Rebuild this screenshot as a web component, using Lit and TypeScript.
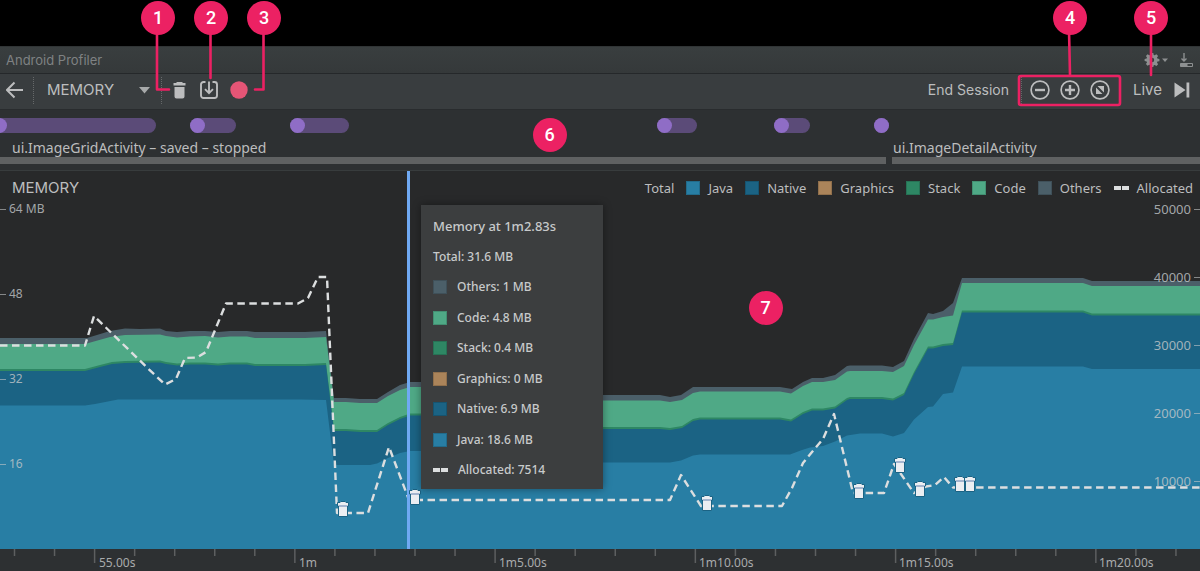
import { LitElement, html, svg, css } from "lit";
import { customElement, state } from "lit/decorators.js";

type Point = [number, number];

/* Plot space is 1200 wide by 378 high, the origin at the top left. */
const PLOT_W = 1200;
const PLOT_H = 378;

const OTHERS: Point[] = [
  [0, 167], [87, 167], [110, 160], [125, 157.5], [140, 158], [160, 157.5], [166, 160], [177, 161], [190, 160],
  [205, 160], [218, 161], [230, 160], [247, 160], [255, 161], [305, 161], [326, 160], [334, 227], [346, 227],
  [360, 228], [377, 228], [388, 221], [400, 214], [410, 211], [425, 211], [450, 224], [660, 224], [670, 226],
  [681, 224], [693, 216], [780, 216], [792, 218], [803, 211], [812, 207], [823, 207], [835, 204], [847, 195],
  [850, 194.5], [882, 194.5], [893, 196], [904, 190], [914, 168], [928, 142], [933, 143], [943, 140], [953, 132],
  [962, 107], [1083, 107], [1092, 110], [1200, 110],
];
const CODE: Point[] = [
  [0, 173], [85, 173], [110, 166], [125, 164], [160, 163.5], [166, 165], [177, 166.5], [190, 165.5], [205, 165],
  [218, 166.5], [230, 165.5], [247, 165.5], [255, 167], [305, 167], [326, 166], [334, 231], [346, 231], [360, 232],
  [377, 232], [388, 225], [400, 219], [410, 216], [425, 216], [450, 229.5], [660, 229.5], [670, 231], [682, 229],
  [693, 222], [700, 220.5], [780, 220.5], [791, 222.5], [803, 215], [812, 211], [823, 211], [835, 209], [847, 200.5],
  [850, 200], [882, 200], [893, 201], [904, 195], [914, 174], [928, 148.5], [933, 148.5], [943, 146], [953, 144.5],
  [962, 112], [1083, 112], [1092, 115], [1200, 115],
];
const NATIVE: Point[] = [
  [0, 199], [85, 199], [100, 195], [112, 192], [125, 191], [160, 190.5], [166, 192], [177, 193.5], [190, 192.5],
  [205, 192.5], [218, 193.5], [230, 192.5], [247, 192.5], [255, 194], [305, 194], [326, 193], [334, 259], [346, 259],
  [360, 260], [377, 260], [388, 253], [400, 247], [410, 243.5], [425, 243.5], [450, 257], [660, 257], [670, 258],
  [682, 256], [693, 249], [700, 247.5], [780, 247.5], [791, 249.5], [803, 242], [812, 238.5], [823, 238.5],
  [835, 236.5], [847, 228], [850, 227], [882, 227], [893, 228.5], [904, 223], [914, 202], [928, 176.5], [933, 176.5],
  [943, 174], [953, 173], [962, 140.5], [1083, 140.5], [1092, 143.5], [1200, 143.5],
];
const JAVA: Point[] = [
  [0, 234.5], [85, 234.5], [95, 233], [118, 228.5], [300, 228.5], [326, 229], [334, 294], [370, 294], [377, 292.5],
  [388, 287], [400, 282], [410, 280], [425, 280], [450, 291.5], [670, 291.5], [681, 289.5], [693, 284.5],
  [700, 283.5], [790, 283.5], [802, 279], [810, 276.5], [823, 275], [835, 270.5], [847, 264.5], [860, 262.5],
  [882, 262.5], [893, 265.5], [904, 262], [914, 248.5], [928, 236], [933, 235.5], [943, 223], [953, 221.5],
  [962, 195.5], [1083, 195.5], [1092, 198], [1200, 198],
];
const ALLOCATED: Point[] = [
  [0, 174.5], [85, 174.5], [94, 145], [148, 197.5], [165, 213.5], [176, 208], [185, 187], [197, 186.5], [206, 181],
  [226, 132.5], [298, 132.5], [308, 127], [318, 106], [327, 106], [337, 342], [368, 342], [389, 276], [409, 329],
  [670, 329], [681, 304], [701, 335], [782, 335], [792, 317], [803, 292], [812, 281], [823, 268], [834, 243],
  [853, 322], [884, 322], [894, 293], [914, 322], [926, 315.5], [935, 314], [944, 306], [953, 316.5], [1200, 316.5],
];
const COLLECTIONS: Point[] = [
  [342.5, 338], [414.5, 326], [706.5, 332], [858.5, 319.5], [899.5, 294], [919.5, 318], [959.5, 313], [970, 313],
];

const TOUCHES: Point[] = [[-8, 156], [190, 236], [290, 349], [657, 697], [774, 810], [874, 889]];

const LEGEND = [
  ["java", "Java"], ["native", "Native"], ["graphics", "Graphics"], ["stack", "Stack"],
  ["code", "Code"], ["others", "Others"], ["dashes", "Allocated"],
];
const READOUT = [
  ["others", "Others: 1 MB"], ["code", "Code: 4.8 MB"], ["stack", "Stack: 0.4 MB"], ["graphics", "Graphics: 0 MB"],
  ["native", "Native: 6.9 MB"], ["java", "Java: 18.6 MB"], ["dashes", "Allocated: 7514"],
];

const line = (points: Point[]) => "M" + points.map((p) => p.join(" ")).join("L");
const area = (points: Point[], lift = 0) =>
  line(points.map(([x, y]) => [x, y - lift] as Point)) + `L${PLOT_W} ${PLOT_H}L0 ${PLOT_H}Z`;
const pct = (value: number, whole: number) => `${(value / whole) * 100}%`;

@customElement("memory-chart")
class MemoryChart extends LitElement {
  static styles = css`
    :host { display: grid; color: #bcbdbe; background: #28292a; border-top: 1px solid #383c3d; box-sizing: border-box; }
    .layer { grid-area: 1 / 1; min-width: 0; min-height: 0; }
    .canvas { position: relative; overflow: hidden; }
    .plot { display: block; position: absolute; inset: 0; width: 100%; height: 100%; }
    .fill-others { fill: #4b5f69; }
    .fill-code { fill: #4fa986; }
    .fill-stack { fill: #2e8764; }
    .fill-native { fill: #1b6384; }
    .fill-java { fill: #287ea4; }
    .allocated { fill: none; stroke: #dcdedf; stroke-width: 2.4; stroke-dasharray: 7.5 4.5; stroke-linejoin: round; vector-effect: non-scaling-stroke; }
    .collection { position: absolute; width: 13px; height: 16px; margin: -8px 0 0 -6px; }
    .cursor { position: absolute; top: 0; bottom: 0; width: 3px; background: #70a9f3; margin-left: -1px; }
    .frame { display: flex; flex-direction: column; z-index: 1; padding-bottom: 8px; }
    .head { display: flex; justify-content: space-between; align-items: center; height: 30px; padding: 3px 7px 0 12px; box-sizing: border-box; }
    h2 { margin: 0; font: 400 15px/20px Inter, sans-serif; }
    .legend { display: flex; gap: 12px; margin: 0; padding: 0; list-style: none; font-size: 13px; line-height: 16px; }
    .entry { display: flex; align-items: center; gap: 8px; }
    .swatch { width: 14px; height: 14px; box-sizing: border-box; border: 1px solid rgba(0, 0, 0, 0.15); }
    .java { background: #287ea4; }
    .native { background: #1b6384; }
    .graphics { background: #ab845a; }
    .stack { background: #2e8764; }
    .code { background: #4fa986; }
    .others { background: #4b5f69; }
    .dashes { width: 15px; height: 4px; border: 0; background: linear-gradient(90deg, #dcdedf 7px, transparent 7px 8px, #dcdedf 8px); }
    .axes { flex: 1; display: flex; justify-content: space-between; font-size: 13px; line-height: 16px; color: rgba(196, 200, 202, 0.8); }
    .axis { display: grid; grid-auto-rows: 1fr; }
    .mark { display: flex; align-items: center; height: 16px; gap: 3px; font-size: 12px; }
    .right .mark { font-size: 13px; }
    .left .mark::before, .right .mark::after { content: ""; width: 6px; height: 1px; background: rgba(196, 200, 202, 0.6); }
    .tooltip { position: absolute; top: 34px; width: 182px; height: 284px; margin-left: 12px; padding: 11px 12px 9px; box-sizing: border-box; display: flex; flex-direction: column; justify-content: space-between; background: #3c3e3f; box-shadow: 0 0 8px rgba(0, 0, 0, 0.4); z-index: 2; font-size: 12px; line-height: 20px; font-weight: 500; color: #c8cacb; }
    .when { font-size: 13px; }
    .tooltip .entry { gap: 10px; }
  `;

  render() {
    return html`
      <div class="layer canvas">
        <svg class="plot" viewBox="0 0 ${PLOT_W} ${PLOT_H}" preserveAspectRatio="none" aria-hidden="true">
          <path class="fill-others" d=${area(OTHERS)} />
          <path class="fill-code" d=${area(CODE)} />
          <path class="fill-stack" d=${area(NATIVE, 1)} />
          <path class="fill-native" d=${area(NATIVE, -1)} />
          <path class="fill-java" d=${area(JAVA)} />
          <path class="allocated" d=${line(ALLOCATED)} />
        </svg>
        <div class="cursor" style="left:${pct(408, PLOT_W)}"></div>
        ${COLLECTIONS.map(
          ([x, y]) => html`<svg class="collection" style="left:${pct(x, PLOT_W)};top:${pct(y, PLOT_H)}" viewBox="0 0 13 16">
            <path d="M4 .5h4l1 1h2.500v3.500h-1v10.500h-9V5h-1V1.500H3z" fill="#ebeef2" stroke="#1b6384" stroke-width="1" />
            <path d="M2 5h8" stroke="#5f7fae" />
          </svg>`
        )}
        <div class="tooltip" role="tooltip" style="left:${pct(409, PLOT_W)}">
          <div class="when">Memory at 1m2.83s</div>
          <div>Total: 31.6 MB</div>
          ${READOUT.map(([kind, text]) => html`<div class="entry"><span class="swatch ${kind}"></span>${text}</div>`)}
        </div>
      </div>
      <div class="layer frame">
        <div class="head">
          <h2>MEMORY</h2>
          <ul class="legend">
            <li>Total</li>
            ${LEGEND.map(([kind, text]) => html`<li class="entry"><span class="swatch ${kind}"></span>${text}</li>`)}
          </ul>
        </div>
        <div class="axes">
          <div class="axis left">${["64 MB", "48", "32", "16"].map((t) => html`<div><div class="mark">${t}</div></div>`)}</div>
          <div class="axis right">
            ${["50000", "40000", "30000", "20000", "10000"].map((t) => html`<div><div class="mark">${t}</div></div>`)}
          </div>
        </div>
      </div>
    `;
  }
}

@customElement("time-axis")
class TimeAxis extends LitElement {
  static styles = css`
    :host { display: grid; height: 22px; background: #2d3032; color: #a9abac; overflow: hidden; }
    .ticks, .labels { grid-area: 1 / 1; width: 100%; height: 22px; box-sizing: border-box; }
    .tick { stroke: #5d5f60; stroke-width: 1.5; vector-effect: non-scaling-stroke; }
    .labels { display: grid; grid-auto-flow: column; grid-auto-columns: 16.6667%; width: 100%; margin-left: 8.25%; font-size: 12px; line-height: 16px; padding-top: 6px; }
  `;

  render() {
    const ticks = Array.from({ length: 30 }, (_, i) => i);
    return html`
      <svg class="ticks" viewBox="0 0 1200 22" preserveAspectRatio="none" aria-hidden="true">
        ${ticks.map((i) => {
          const x = 14.5 + i * 40.05;
          return svg`<path class="tick" d="M${x} 0v${i % 5 === 2 ? 14 : 7}" />`;
        })}
      </svg>
      <div class="labels">
        ${["55.00s", "1m", "1m5.00s", "1m10.00s", "1m15.00s", "1m20.00s"].map((t) => html`<span>${t}</span>`)}
      </div>
    `;
  }
}

@customElement("app-root")
class AppRoot extends LitElement {
  @state() private stage = "MEMORY";

  static styles = css`
    :host { display: flex; flex-direction: column; position: relative; min-height: 100vh; padding-top: 46px; box-sizing: border-box; background: #000; color: #bcbdbe; font-family: "Noto Sans", "Open Sans", sans-serif; overflow: hidden; }
    button, select { font: inherit; color: inherit; background: none; border: 0; padding: 0; margin: 0; }
    svg { display: block; }
    .titlebar { display: flex; align-items: center; height: 28px; box-sizing: border-box; padding: 0 6px; background: linear-gradient(#393e3f, #35393a); border-top: 1px solid #303435; border-bottom: 1px solid #25282a; font: 400 13px/16px Inter, sans-serif; color: #7f8283; }
    .title { flex: 1; font: inherit; margin: 0; }
    .gear { display: flex; align-items: center; margin-right: 11px; }
    .toolbar { display: flex; align-items: center; height: 36px; box-sizing: border-box; padding: 0 3px 3px 0; background: #393d3f; border-bottom: 1px solid #292c2e; font: 400 15px/20px Inter, sans-serif; }
    .tool { display: flex; justify-content: center; align-items: center; width: 30px; height: 30px; }
    .dots { width: 0; height: 27px; border-left: 1px dotted #66696a; }
    .stage { display: grid; align-items: center; width: 103px; margin: 0 11px 0 13px; }
    .stage select { grid-area: 1 / 1; width: 100%; appearance: none; }
    .caret { grid-area: 1 / 1; justify-self: end; pointer-events: none; }
    .back { margin-right: 3px; }
    .toolgroup { display: flex; margin-left: 2px; }
    .push { flex: 1; }
    .end { margin-right: 12px; font-size: 14px; }
    .zoomdots { margin-right: 3px; }
    .live { margin: 0 5px 0 18px; }
    .events { height: 60px; box-sizing: border-box; padding-top: 8px; background: #2d3032; font-size: 14px; line-height: 16px; }
    .track { position: relative; height: 15px; overflow: hidden; }
    .touch { position: absolute; height: 15px; border-radius: 8px; background: #5b4b78; }
    .touch::before { content: ""; display: block; width: 15px; height: 15px; border-radius: 8px; background: #8f6dc6; }
    .activities { display: grid; grid-template-columns: 886fr 308fr; gap: 6px; padding-top: 7px; }
    .activity { min-width: 0; white-space: nowrap; border-bottom: 7px solid #5f6162; padding: 0 0 1px 12px; }
    .activity + .activity { padding-left: 1px; }
    .chart { flex: 1; }
    .badge { position: absolute; display: grid; place-items: center; width: 34px; height: 34px; border-radius: 17px; background: #ec2163; color: #fff; font: 500 18px/34px Roboto, sans-serif; z-index: 5; }
    .leads { position: absolute; top: 0; z-index: 4; pointer-events: none; fill: none; stroke: #ec2163; stroke-width: 2.600; stroke-linejoin: round; stroke-linecap: round; }
    .leads-left { left: 0; }
    .leads-right { right: 0; }
    .b1 { left: 141px; top: 1px; }
    .b2 { left: 194px; top: 1px; }
    .b3 { left: 247px; top: 1px; }
    .b4 { right: 113px; top: 1px; }
    .b5 { right: 32px; top: 1px; }
    .b6 { left: calc(45.8% - 17px); top: 118px; }
    .b7 { left: calc(63.8% - 17px); top: 291px; }
  `;

  render() {
    return html`
      <header class="titlebar">
        <h1 class="title">Android Profiler</h1>
        <button class="gear" aria-label="Settings">
          <svg width="24" height="16" viewBox="0 0 24 16" fill="#8d9091">
            <path fill-rule="evenodd" d="M6.700 1h2.600l.4 1.900 1 .4 1.700-1.100 1.700 1.700L13 5.600l.4 1 2 .4v2.200l-2 .4-.4 1 1.100 1.700-1.700 1.700-1.700-1.100-1 .4L9.300 15H6.700l-.4-1.900-1-.4-1.700 1.100-1.700-1.700L3 10.400l-.4-1-2-.4V7l2-.4.4-1-1.100-1.700 1.700-1.700 1.700 1.100 1-.4zM8 5.800A2.200 2.200 0 1 0 8 10.200 2.200 2.200 0 1 0 8 5.800z" />
            <path d="M18 6.500h6l-3 3.500z" />
          </svg>
        </button>
        <button aria-label="Hide">
          <svg width="15" height="16" viewBox="0 0 15 16" fill="none" stroke="#8d9091">
            <path d="M5 1v8M2.500 6.500L5 9l2.500-2.500" stroke-width="1.400" />
            <path d="M1.500 11.500h12v3h-12z" />
            <path d="M1.500 13h7" stroke-width="3" />
          </svg>
        </button>
      </header>
      <nav class="toolbar" aria-label="Profiler">
        <button class="tool back" aria-label="Back">
          <svg width="18" height="18" viewBox="0 0 18 18" fill="none" stroke="#bcbdbe" stroke-width="2"><path d="M17 9H1.500M8.500 1.500L1 9l7.500 7.500" /></svg>
        </button>
        <span class="dots"></span>
        <label class="stage">
          <select aria-label="Profiler stage" .value=${this.stage} @change=${(e: Event) => (this.stage = (e.target as HTMLSelectElement).value)}>
            <option>MEMORY</option>
          </select>
          <svg class="caret" width="11" height="7" viewBox="0 0 11 7"><path d="M0 0h11L5.500 6.500z" fill="#a7a9aa" /></svg>
        </label>
        <span class="dots"></span>
        <div class="toolgroup">
          <button class="tool" aria-label="Force garbage collection">
            <svg width="13" height="17" viewBox="0 0 13 17" fill="#bcbdbe"><path d="M4 0h5l1 1h2.500v2.500H.5V1H3zM1.500 5h10v9.500a2 2 0 0 1-2 2h-6a2 2 0 0 1-2-2z" /></svg>
          </button>
          <button class="tool" aria-label="Dump Java heap">
            <svg width="18" height="18" viewBox="0 0 18 18" fill="none" stroke="#bcbdbe" stroke-width="1.900">
              <path d="M5.500 1H3.500A2.500 2.500 0 0 0 1 3.500v11A2.500 2.500 0 0 0 3.500 17h11a2.500 2.500 0 0 0 2.500-2.500v-11A2.500 2.500 0 0 0 14.500 1h-2M9 .5v11.500M5 8.200l4 4 4-4" />
            </svg>
          </button>
          <button class="tool" aria-label="Record memory allocations">
            <svg width="18" height="18" viewBox="0 0 18 18"><circle cx="9" cy="9" r="8.700" fill="#e55576" /></svg>
          </button>
        </div>
        <span class="push"></span>
        <button class="end">End Session</button>
        <span class="dots zoomdots"></span>
        <button class="tool" aria-label="Zoom out">
          <svg width="20" height="20" viewBox="0 0 20 20" fill="none" stroke="#bcbdbe" stroke-width="1.700"><circle cx="10" cy="10" r="8.900" /><path d="M5 10h10" stroke-width="2.400" /></svg>
        </button>
        <button class="tool" aria-label="Zoom in">
          <svg width="20" height="20" viewBox="0 0 20 20" fill="none" stroke="#bcbdbe" stroke-width="1.700"><circle cx="10" cy="10" r="8.900" /><path d="M5 10h10M10 5v10" stroke-width="2.400" /></svg>
        </button>
        <button class="tool" aria-label="Reset zoom">
          <svg width="20" height="20" viewBox="0 0 20 20" fill="none" stroke="#bcbdbe" stroke-width="1.700"><circle cx="10" cy="10" r="8.900" /><path d="M7.500 6H14v6.500zM6 7.500V14h6.500z" fill="#bcbdbe" stroke="none" /></svg>
        </button>
        <button class="live">Live</button>
        <button class="tool" aria-label="Jump to live">
          <svg width="16" height="16" viewBox="0 0 16 16" fill="#bcbdbe"><path d="M.5.5L11.500 8 .5 15.500zM12.500.5h2.800v15h-2.800z" /></svg>
        </button>
      </nav>
      <section class="events" aria-label="Events">
        <div class="track">
          ${TOUCHES.map(([from, to]) => html`<span class="touch" style="left:${pct(from, PLOT_W)};width:${pct(to - from, PLOT_W)}"></span>`)}
        </div>
        <div class="activities">
          <div class="activity">ui.ImageGridActivity – saved – stopped</div>
          <div class="activity">ui.ImageDetailActivity</div>
        </div>
      </section>
      <memory-chart class="chart"></memory-chart>
      <time-axis></time-axis>

      <svg class="leads leads-left" width="300" height="110" aria-hidden="true">
        <path d="M157 30V89.500H169M210.500 30V78M263.500 30V89.500H255" />
      </svg>
      <svg class="leads leads-right" width="200" height="110" aria-hidden="true">
        <path d="M69 30L70 75M151 30V75" />
        <rect x="19" y="76" width="101" height="29" rx="2" />
      </svg>
      ${[1, 2, 3, 4, 5, 6, 7].map((n) => html`<span class="badge b${n}">${n}</span>`)}
    `;
  }
}
